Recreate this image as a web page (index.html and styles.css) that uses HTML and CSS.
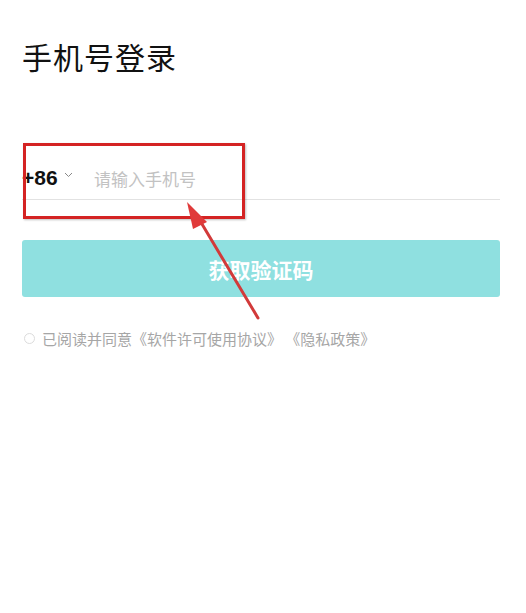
FILE: index.html
```html
<!DOCTYPE html>
<html lang="zh-CN">
<head>
<meta charset="utf-8">
<link rel="stylesheet" href="styles.css">
</head>
<body>
<div class="page">
  <h1 class="title">手机号登录</h1>
  <div class="phone-row">
    <div class="code">+86<svg class="chev" width="9" height="6" viewBox="0 0 9 6"><path d="M1 1 L4.5 4.5 L8 1" fill="none" stroke="#888" stroke-width="1"/></svg></div>
    <div class="placeholder">请输入手机号</div>
  </div>
  <button class="btn">获取验证码</button>
  <div class="agree">
    <span class="radio"></span>
    <span class="agree-text">已阅读并同意《软件许可使用协议》 《隐私政策》</span>
  </div>
</div>
<div class="mark-box"></div>
<svg class="mark-arrow" width="526" height="613" viewBox="0 0 526 613">
  <line x1="258" y1="318" x2="196" y2="214" stroke="#d23a3a" stroke-width="3" stroke-linecap="round"/>
  <polygon points="187,202 207,222 193,229" fill="#e03a3a"/>
</svg>
</body>
</html>
```
FILE: styles.css
```css
html, body {
  margin: 0;
  padding: 0;
  background: #fff;
}
body {
  font-family: "Noto Sans CJK SC", "Noto Sans", sans-serif;
  position: relative;
  width: 526px;
  height: 613px;
  overflow: hidden;
}
.page {
  padding: 36px 26px 0 22px;
}
.title {
  margin: 0;
  font-size: 30px;
  font-weight: 400;
  line-height: 40px;
  color: #111;
  letter-spacing: 1px;
}
.phone-row {
  margin-top: 85px;
  height: 34px;
  display: flex;
  align-items: center;
  border-bottom: 1px solid #e2e2e2;
  padding-bottom: 4px;
}
.code {
  font-family: "Liberation Sans", "Noto Sans", sans-serif;
  font-weight: 700;
  font-size: 21px;
  color: #111;
  display: flex;
  align-items: center;
  width: 72px;
}
.chev {
  margin-left: 6px;
  margin-top: -6px;
}
.placeholder {
  font-size: 17px;
  color: #c2c2c2;
}
.btn {
  display: block;
  margin-top: 40px;
  width: 478px;
  height: 57px;
  border: none;
  border-radius: 3px;
  background: #8fe0e0;
  color: #fff;
  font-family: "Noto Sans CJK SC", sans-serif;
  font-size: 21px;
  font-weight: 700;
  padding: 0;
}
.agree {
  margin-top: 31px;
  display: flex;
  align-items: center;
}
.radio {
  width: 9px;
  height: 9px;
  border: 1px solid #dcdcdc;
  border-radius: 50%;
  margin-left: 2px;
  margin-right: 7px;
}
.agree-text {
  font-size: 15px;
  color: #a6a6a6;
  letter-spacing: 0;
  white-space: pre;
}
.mark-box {
  position: absolute;
  left: 23px;
  top: 143px;
  width: 216px;
  height: 70px;
  border: 3px solid #d42323;
  box-shadow: 1px 1px 2px rgba(0,0,0,0.25);
}
.mark-arrow {
  position: absolute;
  left: 0;
  top: 0;
  pointer-events: none;
}
```
